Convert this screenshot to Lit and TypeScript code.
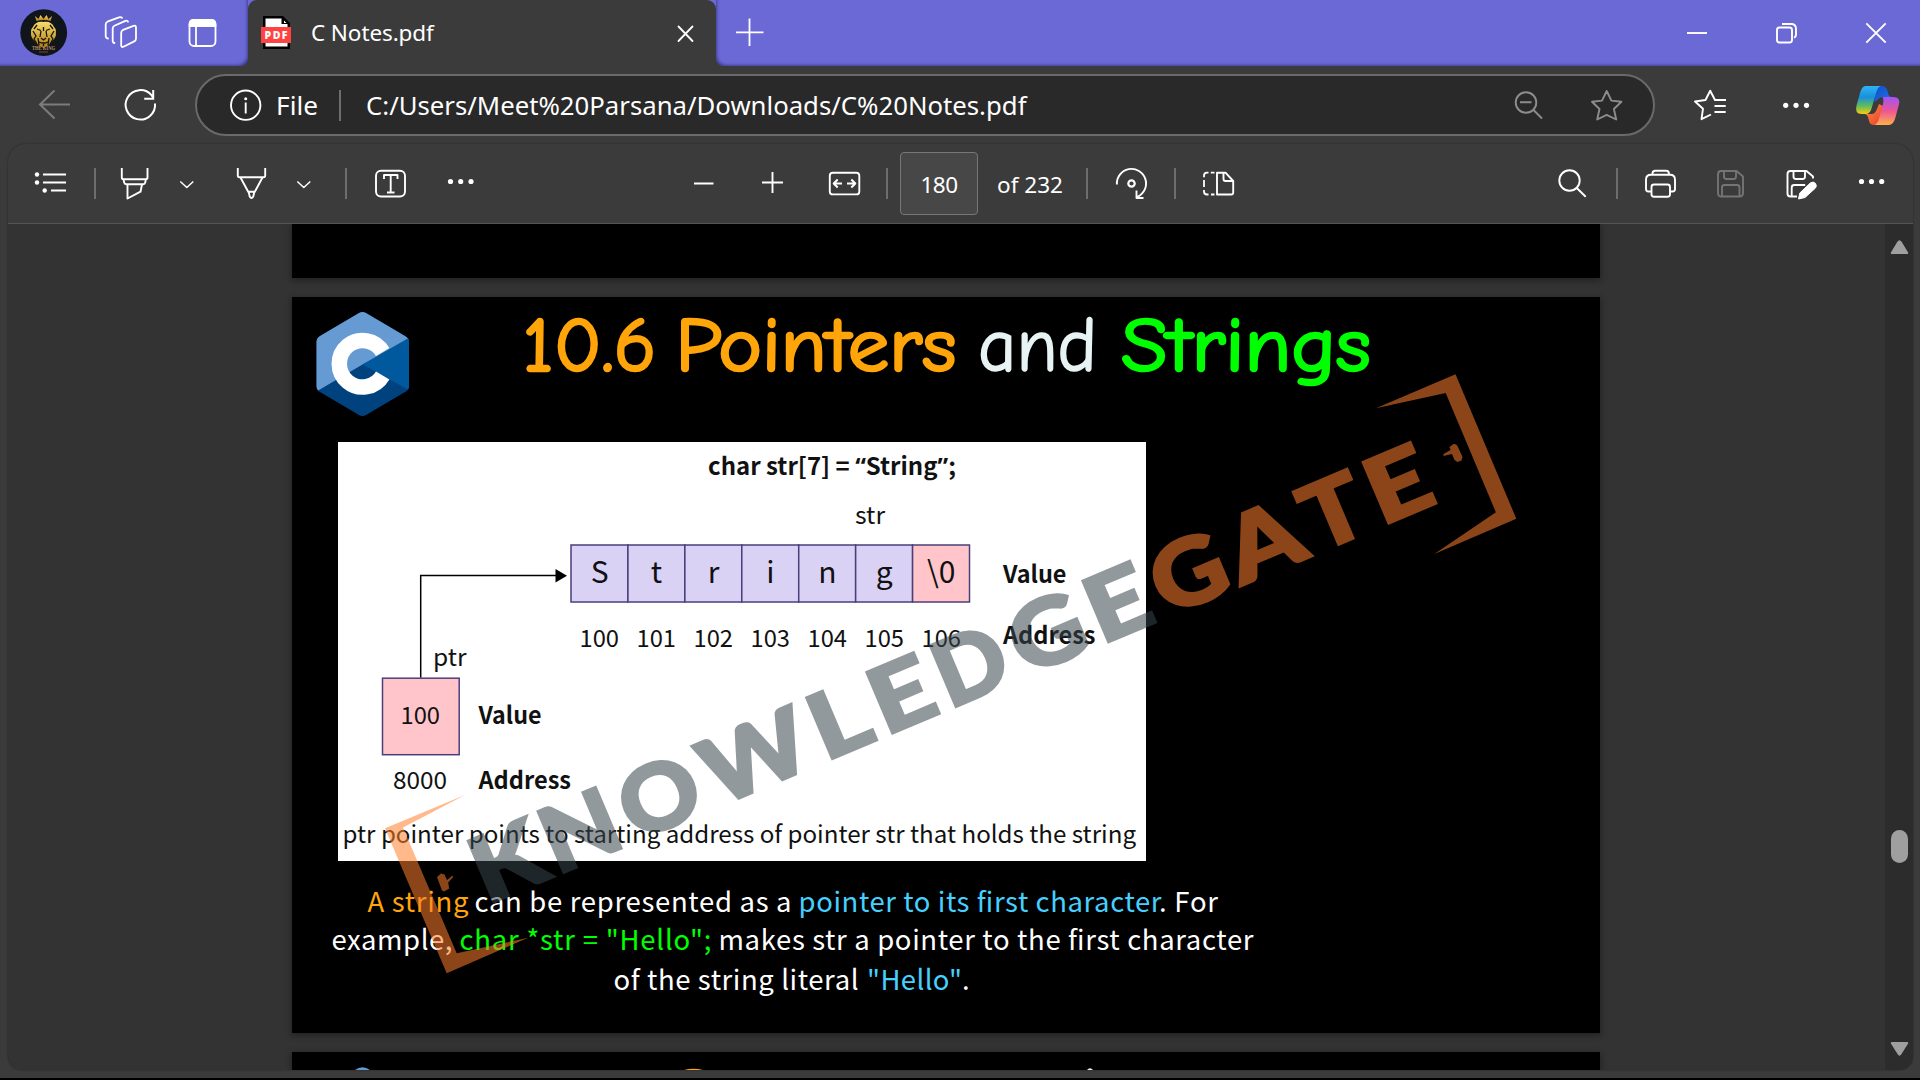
import { LitElement, html, css, svg } from "lit";
import { customElement } from "lit/decorators.js";

/** Text run stretched to an exact width. */
const run = (x: number, y: number, w: number, text: unknown, cls = "", adjust = "spacingAndGlyphs") =>
  svg`<text class=${cls} x=${x} y=${y} textLength=${w} lengthAdjust=${adjust}>${text}</text>`;

@customElement("tab-strip")
class TabStrip extends LitElement {
  static styles = css`
    :host { display: block; height: 66px; }
    .strip { height: 66px; display: flex; align-items: stretch; background: #3b3b3b; }
    .left { width: 248px; box-sizing: border-box; background: #6b69d6; border-radius: 0 0 8px 0; display: flex; align-items: center; padding-left: 20px; box-shadow: inset -2px -2px 3px -1px rgba(30,30,90,.55); }
    .left svg { display: block; flex: none; }
    .tab { width: 468px; height: 66px; box-sizing: border-box; display: flex; align-items: center; background: #3b3b3b; padding-left: 13px; border-radius: 9px 9px 0 0; }
    .corners { background: linear-gradient(#6b69d6 0 12px, #3b3b3b 12px); }
    .right { flex: 1; background: #6b69d6; border-radius: 0 0 0 8px; display: flex; align-items: center; box-shadow: inset 2px -2px 3px -1px rgba(30,30,90,.55); }
    .spacer { flex: 1; }
    svg { display: block; flex: none; }
    .title { font: 22.5px/30px "Noto Sans", sans-serif; letter-spacing: -.1px; color: #fff; margin-left: 19px; width: 365px; white-space: nowrap; }
    .ws { margin-left: 36px; }
    .vt { margin-left: 49px; }
  `;
  render() {
    return html`<div class="strip">
      <div class="left">
        <svg width="48" height="48" viewBox="0 0 48 48">
          <defs><linearGradient id="g" x1="0" y1="0" x2="0" y2="1"><stop offset="0" stop-color="#f6dd6a"/><stop offset="1" stop-color="#b07a18"/></linearGradient></defs>
          <circle cx="23.7" cy="23.7" r="23.4" fill="#10141b"/>
          <path d="M15 7l3.5 3 2-4 3 4 3-4 2 4 3.500-3-1.500 5q-7-2-14 0z" fill="url(#g)"/>
          <path d="M23.500 13c5-1 9 1 10.500 5 3 3 1.500 5 2 8-1 4-3 5-5 8-2 2-4 3-7.500 5-3.500-2-5.500-3-7.500-5-2-3-4-4-5-8 .5-3-1-5 2-8 1.500-4 5.500-6 10.500-5z" fill="url(#g)"/>
          <path d="M17 20l4 1.500M30 20l-4 1.500M23.500 18v4M21 22l-1 6M26 22l1 6M21 29l2.500 2 2.500-2M19 33l3 1h3l3-1M23.500 35v3M13 22l3 5-2 3 3 5M34 22l-3 5 2 3-3 5M17 16l-3 4M30 16l3 4M18 29l1 7M29 29l-1 7" stroke="#171409" stroke-width="1.300" fill="none"/>
          <text x="12" y="41" textLength="23" lengthAdjust="spacingAndGlyphs" font-family="Liberation Serif" font-weight="bold" font-size="5.500" fill="#c09060">THE KING</text>
          <path d="M19 43h9" stroke="#6e512f" stroke-width="1"/>
        </svg>
        <svg class="ws" width="34" height="34" viewBox="0 0 34 34" fill="none" stroke="#fff" stroke-width="1.800" stroke-linejoin="round" stroke-linecap="round">
          <path d="M18.500 14.200l11-4.400q2.500-.9 2.500 1.700v11q0 2-1.800 2.900l-10.700 5.300q-2.300 1-2.300-1.500V17q0-2 1.300-2.800z"/>
          <path d="M10.500 27q-1.800-.2-1.800-2.300V12.500q0-2 1.700-2.800l11-4.800q1.900-.7 2.600.8"/>
          <path d="M4 22.500q-2.300-.4-2.300-2.600V8.500q0-2 1.700-2.800L15 1.300q2-.7 3 .6"/>
        </svg>
        <svg class="vt" width="32" height="32" viewBox="0 0 32 32" fill="none"><rect x="2.500" y="3" width="26" height="26" rx="4.500" stroke="#fff" stroke-width="1.800"/><path d="M1.700 10V7q0-5 5-5h17.600q5 0 5 5v3z" fill="#fff"/><path d="M9 9v20" stroke="#fff" stroke-width="1.800"/></svg>
      </div>
      <div class="corners"><div class="tab">
        <svg width="31" height="34" viewBox="0 0 31 34"><path d="M2 0h20l7 7v26H2z" fill="#000"/><path d="M4.500 2.500h16v5.500h6v22.500h-22z" fill="#fff"/><path d="M23 4.500l2.500 2.500H23z" fill="#fff"/><rect x="0" y="11" width="30" height="16" fill="#ff4340"/>
          <text x="3.500" y="23" textLength="23" lengthAdjust="spacing" font-family="Open Sans" font-weight="800" font-size="10.500" fill="#fff">PDF</text></svg>
        <span class="title">C Notes.pdf</span>
        <svg width="20" height="20" viewBox="0 0 20 20" stroke="#fff" stroke-width="1.800" stroke-linecap="round"><path d="M2.500 3.500l14 14.500M16.500 3.500L2.500 18"/></svg>
      </div></div>
      <div class="right">
        <svg width="70" height="66" viewBox="0 0 70 66" stroke="#fff" stroke-width="1.800"><path d="M20 32.300h27.500M33.500 18.500v27.500"/></svg>
        <div class="spacer"></div>
        <svg width="240" height="66" viewBox="0 0 240 66" fill="none" stroke="#fff" stroke-width="1.900"><path d="M7 33h20"/><rect x="97" y="27.500" width="15" height="15" rx="2.500"/><path d="M102 24h9q5 0 5 5v5.500q0 2.500-2 3"/><path d="M186.300 23.300l19.400 19.400M205.700 23.300l-19.400 19.400"/></svg>
      </div>
    </div>`;
  }
}

@customElement("address-row")
class AddressRow extends LitElement {
  static styles = css`
    :host { display: block; height: 78px; }
    .row { display: flex; height: 78px; padding-top: 8px; box-sizing: border-box; align-items: flex-start; }
    svg { display: block; flex: none; }
    .bar { width: 1460px; height: 62px; box-sizing: border-box; border: 2px solid #6a6a6a; border-radius: 31px; background: #292929; display: flex; align-items: center; color: #fff; }
    .grow { flex: 1; }
  `;
  render() {
    return html`<div class="row">
      <svg width="195" height="62" viewBox="0 74 195 62" fill="none" stroke-width="2">
        <path d="M70 104.500H40M54.500 90.500L40 104.500l14.500 14" stroke="#7c7c7c"/>
        <path d="M155 103.500a14.700 14.700 0 1 1-3.500-8.300l1.700 2.600M153.200 90v8.700h-9" stroke="#fff"/>
      </svg>
      <div class="bar">
        <svg width="860" height="58" viewBox="197 76 860 58">
          <g fill="none" stroke="#fff" stroke-width="1.900"><circle cx="245.700" cy="105.200" r="14.700"/><path d="M245.700 102.500v11"/></g><circle cx="245.700" cy="98.700" r="1.500" fill="#fff"/>
          <path d="M340 90v31" stroke="#767676" stroke-width="1.800"/>
          <g font-family="Noto Sans" font-size="26.200" fill="#fff">
            ${run(276, 114.700, 42, "File")}
            ${run(366, 114.700, 660.500, "C:/Users/Meet%20Parsana/Downloads/C%20Notes.pdf")}
          </g>
        </svg>
        <div class="grow"></div>
        <svg width="160" height="58" viewBox="1493 76 160 58" fill="none" stroke="#8d8d8d" stroke-width="1.900" stroke-linejoin="round"><circle cx="1526" cy="102.500" r="10.300"/><path d="M1520 102.300h11.500M1533.500 110l8.500 8.500M1606.700 91l4.700 9.600 10 1.200-7.500 7.200 2.300 10.500-9.500-4.600-9.500 4.600 2.300-10.500-7.500-7.200 10-1.200z"/></svg>
      </div>
      <svg width="265" height="70" viewBox="1655 74 265 70">
        <defs>
          <linearGradient id="a" x1="0" y1="0" x2="0" y2="1"><stop offset="0" stop-color="#2fb4f5"/><stop offset=".4" stop-color="#1a8fdc"/><stop offset=".7" stop-color="#5cbb5f"/><stop offset="1" stop-color="#f4cf10"/></linearGradient>
          <linearGradient id="b" x1="0" y1="0" x2="0" y2="1"><stop offset="0" stop-color="#a154f5"/><stop offset=".5" stop-color="#ec5694"/><stop offset="1" stop-color="#ffb04a"/></linearGradient>
          <linearGradient id="c" x1="0" y1="0" x2="1" y2="1"><stop offset="0" stop-color="#0a4fc8"/><stop offset="1" stop-color="#2a6fe6"/></linearGradient>
          <linearGradient id="d" x1="0" y1="0" x2="1" y2="1"><stop offset="0" stop-color="#ff8a3c"/><stop offset="1" stop-color="#e8412f"/></linearGradient>
        </defs>
        <g fill="none" stroke="#fff" stroke-width="1.900" stroke-linejoin="round"><path d="M1711 114.500l-9.500 4.700 1.500-10.500-8-7.200 10.500-1.500 4.700-9.300 4.800 9.300h11M1714.500 106h11.200M1714.500 112h11.200"/></g>
        <g fill="#fff"><circle cx="1785.700" cy="105.300" r="2.600"/><circle cx="1796" cy="105.300" r="2.600"/><circle cx="1806.500" cy="105.300" r="2.600"/></g>
        <path d="M1876 86h6q4 0 5.300 4.500l1 3.500q.7 2.800 3 3h-8.500q-3.500 0-5.500 3l-3 2z" fill="url(#c)"/>
        <path d="M1865 114h6.500q3.500 0 5-4l2.500-6 4 2-4.500 15q-1.200 4-4.500 4-4 0-5-4l-1-4q-.8-2.500-3-3z" fill="url(#d)"/>
        <path d="M1865.500 86H1881q-3.500 1-5 7l-4.300 15q-1.700 6-6 6h-4.200q-7 0-5-8.500l3.500-12.500q2-7 5.500-7z" fill="url(#a)"/>
        <path d="M1882.500 97h11q7.500 0 5.300 8l-3.500 13q-2 7-6.500 7h-14.500q3.300-1 4.700-7l4-14q1-5-.5-7z" fill="url(#b)"/>
      </svg>
    </div>`;
  }
}

@customElement("pdf-toolbar")
class PdfToolbar extends LitElement {
  static styles = css`
    :host { display: block; height: 80px; }
    .bar { height: 80px; box-sizing: border-box; display: flex; align-items: flex-start; border-bottom: 1px solid #555; background: #3b3b3b; color: #fff; font: 22.500px/30px "Noto Sans", sans-serif; }
    svg { display: block; flex: none; }
    .page { width: 78px; height: 63px; box-sizing: border-box; margin-top: 8px; border: 1px solid #777; border-radius: 4px; background: #474747; display: flex; align-items: center; justify-content: center; letter-spacing: -.5px; padding-top: 3px; }
    .grow { flex: 1; }
  `;
  render() {
    return html`<div class="bar">
      <svg width="892" height="79" viewBox="8 144 892 79" fill="none" stroke="#fff" stroke-width="1.900" stroke-linejoin="round">
        <path d="M43 174.500h23M43 182.500h23M51 190.500h15"/>
        <g fill="#fff" stroke="none"><circle cx="37" cy="174.500" r="2.200"/><circle cx="37" cy="182.500" r="2.200"/><circle cx="44.700" cy="190.500" r="2.200"/></g>
        <path d="M95 168v31M346 168v31M887 168v31" stroke="#747474" stroke-width="1.800"/>
        <path d="M121.800 168v9.500q0 1.700 1.700 1.700h22.300q1.700 0 1.700-1.700V168M123.500 179.500l.7 3q.4 1.700 2 1.700h17q1.600 0 2-1.700l.7-3M127.500 184.500v14l13-6.800 1.500-7.200"/>
        <path d="M180.300 181.500l6.500 6 6.500-6M297.300 181.500l6.500 6 6.500-6" stroke-width="1.500"/>
        <path d="M237.800 168v7.500q0 1.700 1.700 1.700h24q1.700 0 1.700-1.700V168M240.500 177.500l7.700 14.300h6.600l7.700-14.300M248.700 192l1 4.500q1.800 3 3.600 0l1-4.500"/>
        <rect x="376" y="170.800" width="29" height="25.700" rx="5"/>
        <path d="M384 179v-4h13.500v4M390.700 175v17.500M387 192.500h7.500"/>
        <g fill="#fff" stroke="none"><circle cx="450.500" cy="181.500" r="2.600"/><circle cx="460.700" cy="181.500" r="2.600"/><circle cx="471" cy="181.500" r="2.600"/></g>
        <path d="M694 183.500h19.500M762 182.500h21M772.500 172v21"/>
        <rect x="829.800" y="172.700" width="29.500" height="21.700" rx="3"/><path d="M842 183.500h-8M837.700 179.500l-4 4 4 4M847 183.500h8M851.300 179.500l4 4-4 4" stroke-width="2"/>
      </svg>
      <div class="page">180</div>
      <svg width="280" height="79" viewBox="978 144 280 79" fill="none" stroke="#fff" stroke-width="1.900" stroke-linejoin="round">
        <g fill="#fff" stroke="none">${run(997, 193, 66, "of 232")}</g>
        <path d="M1087 168v31M1175 168v31" stroke="#747474" stroke-width="1.800"/>
        <path d="M1116.900 184.500a14.600 14.600 0 1 1 20.600 12.300M1136.500 190.500v7.500h7"/><circle cx="1131.500" cy="183.500" r="3.200" stroke-width="2.200"/>
        <path d="M1217 172.700h8.500l7.700 8.300v11.500q0 2-2 2H1217zM1223.500 172.700v6.300q0 2 2 2h7.500"/>
        <path d="M1214.500 172.700h-3.700M1208.500 172.700h-1.500q-3 0-3 3v1.500M1204 180v7M1204 190v1.500q0 3 3 3h1.500M1211 194.500h3.500" stroke-width="1.800"/>
      </svg>
      <div class="grow"></div>
      <svg width="373" height="79" viewBox="1540 144 373 79" fill="none" stroke="#fff" stroke-width="1.900" stroke-linejoin="round">
        <circle cx="1569.500" cy="180.500" r="10.200"/><path d="M1577 188.300l8.700 8.500"/>
        <path d="M1617 168v31" stroke="#747474" stroke-width="1.800"/>
        <path d="M1652.500 174.500v-1q0-2.700 2.700-2.700h11q2.700 0 2.700 2.700v1M1651.500 191.500h-3q-2.500 0-2.500-2.500v-9.300q0-5 5-5h19q5 0 5 5v9.300q0 2.500-2.500 2.500h-3"/><rect x="1651.500" y="184.500" width="18.500" height="12.300" rx="2.500"/>
        <path stroke="#747474" d="M1721 171h15.500l6.500 5.500V193q0 3.500-3.500 3.500h-18q-3.500 0-3.500-3.500v-18.500q0-3.500 3-3.500zM1724 171v5.500q0 2.500 2.500 2.500h7q2.500 0 2.500-2.500V171M1722 196.500v-9q0-2.500 2.500-2.500h12.500q2.500 0 2.500 2.500v9"/>
        <path d="M1797 196.500h-6.500q-3 0-3-3v-19.500q0-3 3-3h16l6.500 5.500v2M1793.500 171v5.500q0 2.500 2.500 2.500h6.500q2.500 0 2.500-2.500V171M1791.700 196v-8.500q0-2.500 2.500-2.500h11"/>
        <path d="M1798.500 199l1.300-6 10.500-10q3-2 5 .3t.2 4.700l-10.500 9.500z" fill="#fff" stroke-width="1"/>
        <g fill="#fff" stroke="none"><circle cx="1861.500" cy="181.500" r="2.600"/><circle cx="1871.500" cy="181.500" r="2.600"/><circle cx="1881.700" cy="181.500" r="2.600"/></g>
      </svg>
    </div>`;
  }
}

/** Letter, left and right ink edge along the rotated baseline, side bearings. */
type Glyph = [string, number, number, number, number];
const SLATE: Glyph[] = [
  ["K", -367, -300, 7, 0], ["N", -291, -225, 7, 7], ["O", -210, -133.500, 3, 3], ["W", -124, -12.500, 0, 0],
  ["L", 0, 51.500, 7, 2], ["E", 65.300, 119.500, 7, 4], ["D", 135, 200, 7, 3], ["G", 213.500, 283, 3, 5], ["E", 300, 354.500, 7, 4],
];
const FLAME: Glyph[] = [["G", 367, 436.500, 3, 5], ["A", 444.800, 523.500, 0, 0], ["T", 529, 591, 1, 1], ["E", 604.300, 659, 7, 4]];

@customElement("slide-page")
class SlidePage extends LitElement {
  static styles = css`
    :host { display: block; }
    svg { display: block; }
    .title { font-family: "Comic Sans MS", "Comic Neue", "Noto Sans", sans-serif; font-size: 77px; stroke-linejoin: round; stroke-width: 2.600px; }
    .orange { fill: #ffa50a; }
    .title.orange { stroke: #ffa50a; }
    .pale { fill: #e8f3f3; stroke: #e8f3f3; }
    .title.pale { stroke-width: 1.500px; }
    .green { fill: #0f0; }
    .title.green { stroke: #0f0; }
    .blue { fill: #45d0ff; }
    .white { fill: #fff; }
    .body { font-family: "Noto Sans CJK SC", sans-serif; font-size: 27.500px; }
    .fig { font-family: "Noto Sans CJK SC", sans-serif; font-size: 24px; fill: #111; }
    .b { font-weight: 700; }
    .q { font-family: "Open Sans", sans-serif; }
    .big { font-size: 30px; text-anchor: middle; }
    .mark { font-family: Lato, sans-serif; font-weight: 900; font-size: 91px; stroke-width: 3px; }
    .mark.slate { stroke: #38464c; }
    .mark.flame { stroke: #ff7f2c; }
    .slate { fill: #38464c; }
    .flame { fill: #ff7f2c; }
  `;
  private mark(tone: string, glyphs: Glyph[]) {
    return svg`<text class="mark ${tone}" y="-1.5">${glyphs.map(([c, l, r, lsb, rsb]) =>
      svg`<tspan x=${l + 1.5 - lsb} textLength=${r - l - 3 + lsb + rsb} lengthAdjust="spacingAndGlyphs">${c}</tspan>`)}</text>`;
  }
  render() {
    const word = ["S", "t", "r", "i", "n", "g", "\\0"];
    const sp = "spacing";
    return html`<svg width="1308" height="736" viewBox="292 297 1308 736">
      <rect x="292" y="297" width="1308" height="736" fill="#000"/>
      <defs><clipPath id="hex"><path d="M366 313q-3.500-2-7 0l-39 23q-3.500 2-3.500 6v44q0 4 3.500 6l39 23q3.500 2 7 0l39-23q4-2 4-6v-44q0-4-4-6z"/></clipPath></defs>
      <g clip-path="url(#hex)"><rect x="316" y="310" width="94" height="108" fill="#00427e"/><path d="M310 305h110v29L362.500 364.500 312 394z" fill="#659ad2"/><path d="M412 336v56L362.500 364.500z" fill="#00599c"/></g>
      <path d="M382.700 352A23.300 23.300 0 1 0 382.700 375.500" fill="none" stroke="#fff" stroke-width="15.500"/>

      ${run(522.500, 370.500, 134, "10.6", "title orange")}
      ${run(675.500, 370.500, 281, "Pointers", "title orange")}
      ${run(978, 370.500, 119, "and", "title pale")}
      ${run(1121, 370.500, 250, "Strings", "title green")}

      <rect x="338" y="442" width="808" height="419" fill="#fff"/>
      ${run(708, 475, 248, svg`char str[7] = <tspan class="q">“</tspan>String<tspan class="q">”</tspan>;`, "fig b")}
      ${run(855, 523.500, 30, "str", "fig")}
      <g stroke="#4b3f7b" stroke-width="1.500">
        ${word.map((_, i) => svg`<rect x=${571 + i * 56.93} y="545" width="56.930" height="57" fill=${i === 6 ? "#ffc5cb" : "#d9d2f5"}/>`)}
        <rect x="382.500" y="678.200" width="76.700" height="76.500" fill="#ffc5cb"/>
      </g>
      ${word.map((c, i) => svg`<text class="fig big" x=${599.6 + i * 56.93} y="583">${c}</text>`)}
      ${word.map((_, i) => run(579.500 + i * 57, 646.500, 39.500, String(100 + i), "fig"))}
      <path d="M420.700 677.500V575.500H557" fill="none" stroke="#000" stroke-width="1.500"/><path d="M555.500 569v13.500l11.500-6.700z"/>
      ${run(433, 666, 33.500, "ptr", "fig")}
      ${run(400.500, 724, 39.500, "100", "fig")}
      ${run(478.500, 724, 63, "Value", "fig b")}
      ${run(393, 788.500, 54, "8000", "fig")}
      ${run(478.500, 788.500, 92.500, "Address", "fig b")}
      ${run(1003, 583, 63.500, "Value", "fig b")}
      ${run(1003, 643.500, 92.500, "Address", "fig b")}
      ${run(342.500, 843, 793.500, "ptr pointer points to starting address of pointer str that holds the string", "fig")}

      ${run(367.500, 911.700, 101, "A string", "body orange", sp)}
      ${run(474.500, 911.700, 317, "can be represented as a", "body white", sp)}
      ${run(798.500, 911.700, 363, "pointer to its first character", "body blue", sp)}
      ${run(1159, 911.700, 59, ". For", "body white", sp)}
      ${run(331.500, 950, 121, "example,", "body white", sp)}
      ${run(459.500, 950, 252, "char *str = \"Hello\";", "body green", sp)}
      ${run(718.500, 950, 535, "makes str a pointer to the first character", "body white", sp)}
      ${run(613.500, 990, 245, "of the string literal", "body white", sp)}
      ${run(867, 990, 95, "\"Hello\"", "body blue", sp)}
      ${run(962, 990, 8, ".", "body white", sp)}

      <g opacity=".545">
        <g transform="translate(830.700 761) rotate(-22.930)">
          ${this.mark("slate", SLATE)}
          ${this.mark("flame", FLAME)}
        </g>
        <g class="flame">
          <path d="M1375.900 408.300L1455.500 374.300 1516.300 518.700 1434.300 554 1495.900 512.300 1445.700 393z"/>
          <path d="M465 795L385 828.300 446.700 973.300 528.300 937.700 456.700 953.300 403 827.500z"/>
          <path d="M1449.500 447l4-3q2.500-.5 4 2l5 11-1 3.500-4 1.500-3-2-2.500-6-8.500 2v-2l7-4z"/>
          <path d="M437 877l4-3.500 3.500 1 2.500 5.500 5.500-4.500.7 1.500-5 5.500 1 6-5 3-2.200-1z"/>
        </g>
      </g>
    </svg>`;
  }
}

@customElement("app-root")
class AppRoot extends LitElement {
  static styles = css`
    :host { display: block; width: 1920px; height: 1080px; overflow: hidden; background: #3b3b3b; }
    .window { width: 1920px; height: 1080px; box-sizing: border-box; border-bottom: 2px solid #000; display: flex; flex-direction: column; }
    .panel { width: 1905px; height: 926px; margin-left: 8px; border-radius: 18px 18px 14px 14px; overflow: hidden; background: #333; box-shadow: 0 0 2px rgba(0,0,0,.4); }
    .view { display: flex; height: 846px; }
    .pages { flex: 1; padding-left: 284px; display: flex; flex-direction: column; gap: 19px; height: 846px; overflow: hidden; }
    .sheet { width: 1308px; flex: none; background: #000; box-shadow: 0 2px 6px 1px rgba(0,0,0,.32); }
    .prev { height: 54px; }
    .next { height: 18px; }
    .next svg, .scroll svg { display: block; }
    .scroll { width: 28px; background: #2c2c2c; }
  `;
  render() {
    return html`<div class="window">
      <tab-strip></tab-strip>
      <address-row></address-row>
      <div class="panel">
        <pdf-toolbar></pdf-toolbar>
        <div class="view">
          <div class="pages">
            <div class="sheet prev"></div>
            <div class="sheet"><slide-page></slide-page></div>
            <div class="sheet next"><svg width="1308" height="18"><path d="M63 18q7.500-5.500 15 0z" fill="#659ad2"/><path d="M392 18q9.500-2.500 19 0z" fill="#ffa50a"/><path d="M795 18q3-3.500 6 0z" fill="#e8f3f3"/></svg></div>
          </div>
          <div class="scroll"><svg width="28" height="846" viewBox="1885 224 28 846" fill="#9f9f9f"><path d="M1892 254h15q2 0 .8-2l-6-10q-2.300-3.500-4.600 0l-6 10q-1.200 2 .8 2z"/><rect x="1891" y="830" width="17" height="33" rx="8.500"/><path d="M1892 1042h15q2 0 .8 2l-6.300 10q-2 3.500-4 0l-6.300-10q-1.200-2 .8-2z"/></svg></div>
        </div>
      </div>
    </div>`;
  }
}
